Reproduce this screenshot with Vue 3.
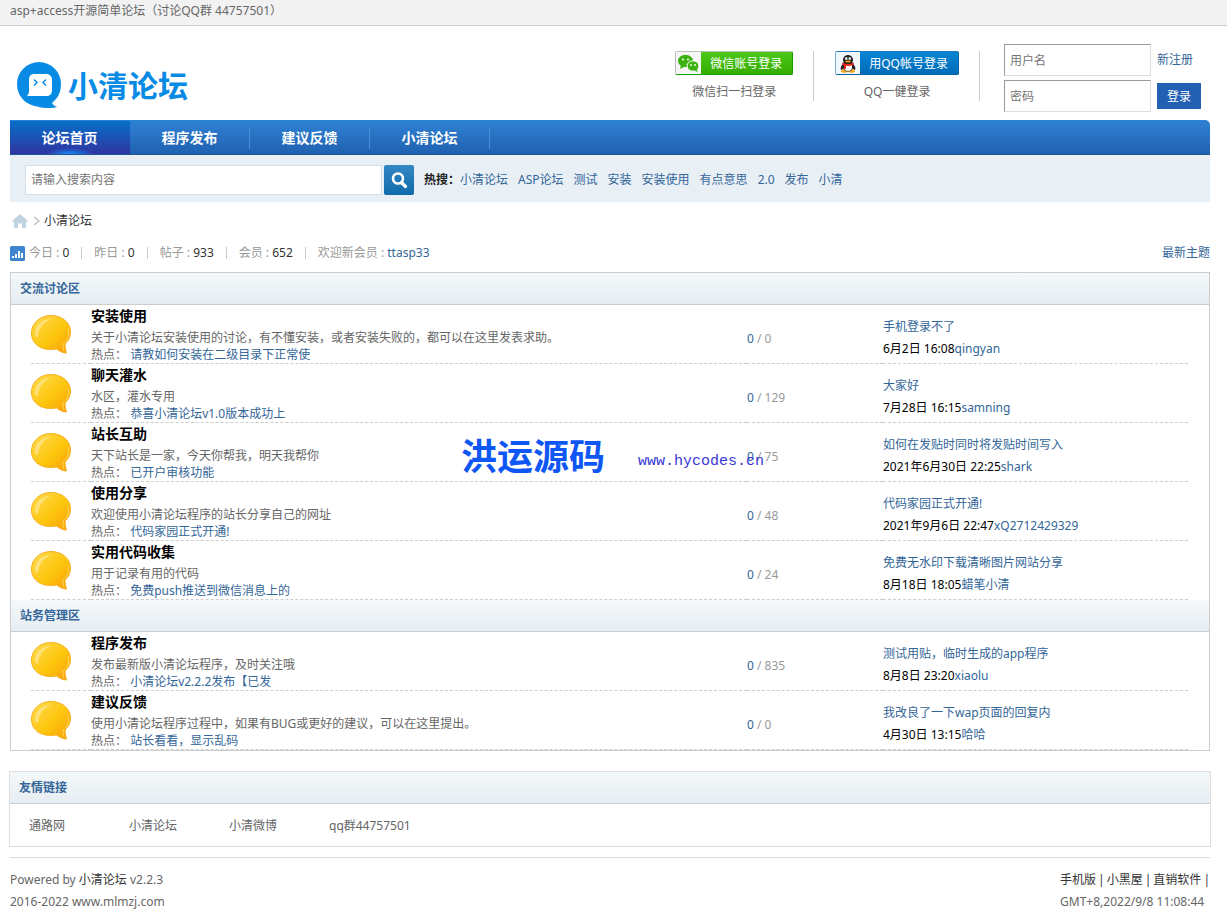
<script setup>
import { ref } from 'vue'

const keyword = ref('')
const user = ref('')
const password = ref('')

const navItems = ['论坛首页', '程序发布', '建议反馈', '小清论坛']
const hotWords = ['小清论坛', 'ASP论坛', '测试', '安装', '安装使用', '有点意思', '2.0', '发布', '小清']
const stats = [
  { label: '今日', value: '0' },
  { label: '昨日', value: '0' },
  { label: '帖子', value: '933' },
  { label: '会员', value: '652' },
]
const sections = [
  {
    name: '交流讨论区',
    forums: [
      { name: '安装使用', desc: '关于小清论坛安装使用的讨论，有不懂安装，或者安装失败的，都可以在这里发表求助。', hot: '请教如何安装在二级目录下正常使', today: '0', total: '0', last: '手机登录不了', time: '6月2日 16:08', by: 'qingyan' },
      { name: '聊天灌水', desc: '水区，灌水专用', hot: '恭喜小清论坛v1.0版本成功上', today: '0', total: '129', last: '大家好', time: '7月28日 16:15', by: 'samning' },
      { name: '站长互助', desc: '天下站长是一家，今天你帮我，明天我帮你', hot: '已开户审核功能', today: '0', total: '75', last: '如何在发贴时同时将发贴时间写入', time: '2021年6月30日 22:25', by: 'shark' },
      { name: '使用分享', desc: '欢迎使用小清论坛程序的站长分享自己的网址', hot: '代码家园正式开通!', today: '0', total: '48', last: '代码家园正式开通!', time: '2021年9月6日 22:47', by: 'xQ2712429329' },
      { name: '实用代码收集', desc: '用于记录有用的代码', hot: '免费push推送到微信消息上的', today: '0', total: '24', last: '免费无水印下载清晰图片网站分享', time: '8月18日 18:05', by: '蜡笔小清' },
    ],
  },
  {
    name: '站务管理区',
    forums: [
      { name: '程序发布', desc: '发布最新版小清论坛程序，及时关注哦', hot: '小清论坛v2.2.2发布【已发', today: '0', total: '835', last: '测试用贴，临时生成的app程序', time: '8月8日 23:20', by: 'xiaolu' },
      { name: '建议反馈', desc: '使用小清论坛程序过程中，如果有BUG或更好的建议，可以在这里提出。', hot: '站长看看，显示乱码', today: '0', total: '0', last: '我改良了一下wap页面的回复内', time: '4月30日 13:15', by: '哈哈' },
    ],
  },
]
const friendLinks = ['通路网', '小清论坛', '小清微博', 'qq群44757501']
const footLinks = ['手机版', '小黑屋', '直销软件']
</script>

<template>
  <div class="page">
    <div class="topbar">asp+access开源简单论坛（讨论QQ群 44757501）</div>

    <div class="wrap">
      <header class="header">
        <a class="logo" href="#">
          <svg width="46" height="48" viewBox="0 0 46 48" aria-hidden="true">
            <path fill="#078be4" d="M22 0a22 22 0 0 1 22 22c0 8-3 14-9 19 1 2 3 3 5 4-6 2-14 1-20-.5C8 42.500 0 34 0 22A22 22 0 0 1 22 0z" />
            <path fill="#fff" d="M17 12h12c4 0 6 2.500 6 6v10c0 4-2 6-6 6H10c1.500-1.500 2-3 2-5V18c0-4 2-6 5-6z" />
            <path fill="none" stroke="#078be4" stroke-width="1.500" d="M17 17.500l3 3-3 3M29 17.500l-3 3 3 3" />
          </svg>
          <span>小清论坛</span>
        </a>

        <div class="account">
          <div class="quick">
            <a class="oauth wechat" href="#">
              <svg width="25" height="22" viewBox="0 0 25 22" aria-hidden="true">
                <ellipse cx="9.500" cy="9" rx="7.500" ry="6.200" fill="#3eb211" />
                <path d="M5 13l-1 4 4-2z" fill="#3eb211" />
                <ellipse cx="17" cy="14" rx="6" ry="5.200" fill="#3eb211" stroke="#fff" />
                <path d="M18 18l3.500 2-.5-3.500z" fill="#3eb211" />
                <g fill="#fff"><circle cx="7" cy="7.500" r="1" /><circle cx="12" cy="7.500" r="1" /><circle cx="15" cy="13" r=".9" /><circle cx="19" cy="13" r=".9" /></g>
              </svg>
              <span>微信账号登录</span>
            </a>
            <p>微信扫一扫登录</p>
          </div>
          <div class="quick">
            <a class="oauth qq" href="#">
              <svg width="24" height="22" viewBox="0 0 24 22" aria-hidden="true">
                <path d="M7 12c-2 2-3 4-2 6l2-1z M17 12c2 2 3 4 2 6l-2-1z" fill="#222" />
                <ellipse cx="8.500" cy="19" rx="3.500" ry="1.800" fill="#f5a623" />
                <ellipse cx="15.500" cy="19" rx="3.500" ry="1.800" fill="#f5a623" />
                <ellipse cx="12" cy="14" rx="5.500" ry="5.500" fill="#222" />
                <ellipse cx="12" cy="15" rx="4" ry="4" fill="#fff" />
                <ellipse cx="12" cy="8" rx="5" ry="5" fill="#222" />
                <ellipse cx="10.300" cy="6.500" rx="1.200" ry="1.600" fill="#fff" />
                <ellipse cx="13.700" cy="6.500" rx="1.200" ry="1.600" fill="#fff" />
                <ellipse cx="12" cy="9.500" rx="2.800" ry="1" fill="#f5a623" />
                <path d="M6.500 10.500c3 2 8 2 11 0l.5 2c-2 1-4 1.500-6 1.500l-2-.2V17H8v-3.500l-2-1z" fill="#e8251f" />
              </svg>
              <span>用QQ帐号登录</span>
            </a>
            <p>QQ一健登录</p>
          </div>
          <form class="login" @submit.prevent>
            <input v-model="user" type="text" placeholder="用户名" aria-label="用户名" />
            <a href="#">新注册</a>
            <input v-model="password" type="password" placeholder="密码" aria-label="密码" />
            <button type="submit">登录</button>
          </form>
        </div>
      </header>

      <nav class="nav">
        <a v-for="(item, i) in navItems" :key="item" href="#" :class="{ active: i === 0 }">{{ item }}</a>
      </nav>

      <form class="search" @submit.prevent>
        <input v-model="keyword" type="text" placeholder="请输入搜索内容" aria-label="请输入搜索内容" />
        <button type="submit" aria-label="搜索">
          <svg width="30" height="30" viewBox="0 0 30 30" aria-hidden="true">
            <circle cx="14" cy="13.500" r="5" fill="none" stroke="#fff" stroke-width="2.600" />
            <path d="M17.500 17.500l4 4" stroke="#fff" stroke-width="3.200" stroke-linecap="round" />
          </svg>
        </button>
        <b>热搜：</b>
        <div class="hot-words">
          <a v-for="word in hotWords" :key="word" href="#">{{ word }}</a>
        </div>
      </form>

      <div class="crumb">
        <a href="#" aria-label="首页">
          <svg width="20" height="16" viewBox="0 0 20 16" aria-hidden="true">
            <path fill="#bfd3e0" d="M10 1l8.500 7.500h-2.500V15h-4v-4.500H8V15H4V8.500H1.500z" />
          </svg>
        </a>
        <svg width="8" height="10" viewBox="0 0 8 10" aria-hidden="true">
          <path d="M1 1l5 4-5 4" fill="none" stroke="#bbb" stroke-width="1.300" />
        </svg>
        <a href="#">小清论坛</a>
      </div>

      <div class="stats">
        <svg width="15" height="15" viewBox="0 0 15 15" aria-hidden="true">
          <rect width="15" height="15" rx="1.500" fill="#3f84cf" />
          <path fill="#fff" d="M2 10h2v2H2zM5 8h2v4H5zM8 5h2v7H8zM11 7h2v5h-2z" />
        </svg>
        <ul>
          <li v-for="stat in stats" :key="stat.label">{{ stat.label }} : <em>{{ stat.value }}</em></li>
          <li>欢迎新会员 : <a href="#">ttasp33</a></li>
        </ul>
        <a href="#">最新主题</a>
      </div>

      <main class="board">
        <section v-for="section in sections" :key="section.name">
          <h2 class="bar">{{ section.name }}</h2>
          <div class="rows">
            <table>
              <colgroup><col class="c-icon" /><col /><col class="c-count" /><col class="c-last" /></colgroup>
              <tbody>
                <tr v-for="forum in section.forums" :key="forum.name">
                  <td class="icon">
                    <svg width="42" height="42" viewBox="0 0 42 42" aria-hidden="true">
                      <defs>
                        <linearGradient id="bubble" x1="0" y1="0" x2="1" y2="1">
                          <stop offset="0" stop-color="#ffdc55" />
                          <stop offset=".55" stop-color="#fdc60c" />
                          <stop offset="1" stop-color="#f99c0c" />
                        </linearGradient>
                      </defs>
                      <path fill="url(#bubble)" stroke="#f9b01e" d="M20 1.500C31 1.500 39.500 8.500 39.500 18c0 5-2 9-5.500 12 0 3 .5 5.500 1.500 9-4 0-7-2-10-4C10 37.500.5 30 .5 19 .5 9 9 1.500 20 1.500z" />
                      <path fill="#fff" opacity=".35" d="M4 20C4 11 11 5 21 5c-8 2-13 8-14 18-2 0-3-1-3-3z" />
                      <path fill="none" stroke="#ffd75a" d="M37 15c2 7-1 12-5 15 0 3 0 4 1 7" />
                    </svg>
                  </td>
                  <td class="info">
                    <h3><a href="#">{{ forum.name }}</a></h3>
                    <p>{{ forum.desc }}</p>
                    <p>热点： <a href="#">{{ forum.hot }}</a></p>
                  </td>
                  <td class="count"><em>{{ forum.today }}</em> / {{ forum.total }}</td>
                  <td class="last">
                    <a href="#">{{ forum.last }}</a>
                    <div>{{ forum.time }}<a href="#">{{ forum.by }}</a></div>
                  </td>
                </tr>
              </tbody>
            </table>
          </div>
        </section>
        <div class="watermark"><b>洪运源码</b><span>www.hycodes.cn</span></div>
      </main>

      <section class="friends">
        <h2 class="bar">友情链接</h2>
        <ul>
          <li v-for="link in friendLinks" :key="link"><a href="#">{{ link }}</a></li>
        </ul>
      </section>

      <footer class="footer">
        <div>
          <p>Powered by <a href="#">小清论坛</a> v2.2.3</p>
          <p>2016-2022 www.mlmzj.com</p>
        </div>
        <div>
          <p class="foot-links"><template v-for="link in footLinks" :key="link"><a href="#">{{ link }}</a><span>|</span></template></p>
          <p>GMT+8,2022/9/8 11:08:44</p>
        </div>
      </footer>
    </div>
  </div>
</template>

<style>
body {
  margin: 0;
  background: #fff;
}
</style>

<style scoped>
.page,
.page input,
.page button {
  font-family: "Noto Sans", "Noto Sans CJK SC", sans-serif;
  font-size: 12px;
}
.page {
  color: #666;
  line-height: 22px;
}
.page * {
  box-sizing: border-box;
}
a {
  color: #369;
  text-decoration: none;
}
p, h2, h3, ul {
  margin: 0;
  padding: 0;
}
ul {
  list-style: none;
}
em {
  font-style: normal;
}
svg {
  display: block;
}
input::placeholder {
  color: #757575;
  opacity: 1;
}
.topbar {
  height: 26px;
  padding: 0 10px;
  background: #f2f2f2;
  border-bottom: 1px solid #cdcdcd;
}
.wrap {
  padding: 0 17px 0 10px;
}

.header {
  display: flex;
  justify-content: space-between;
  height: 94px;
}
.logo {
  display: flex;
  align-items: center;
  gap: 5px;
  padding: 26px 0 0 7px;
  color: #078be4;
  font-size: 30px;
  font-weight: bold;
}
.account {
  display: flex;
  align-items: flex-start;
  padding: 18px 9px 0 0;
}
.quick {
  height: 50px;
  margin-top: 7px;
  padding-right: 20px;
  margin-right: 21px;
  border-right: 1px solid #ccc;
  text-align: center;
}
.quick + .quick {
  margin-right: 24px;
}
.quick p {
  padding-top: 6px;
}
.oauth {
  display: flex;
  height: 24px;
  border: 1px solid;
  border-radius: 2px;
  color: #fff;
  line-height: 23px;
}
.oauth span {
  padding: 0 10px 0 9px;
}
.wechat {
  background: linear-gradient(#4cc81a, #35ad00);
  border-color: #b9c4b5 #15a000 #15a000 #bbb;
}
.wechat svg {
  background: #f6f6f6;
}
.qq {
  background: linear-gradient(#0785d4, #006bb8);
  border-color: #1b79b9 #0062a8 #0062a8 #77a6c8;
}
.qq svg {
  background: #f1f8fd;
}
.login {
  display: grid;
  grid-template-columns: 147px 44px;
  gap: 4px 6px;
  align-items: center;
}
.login input {
  width: 100%;
  height: 32px;
  padding: 0 5px;
  border: 1px solid;
  border-color: #999 #ddd #ddd #999;
}
.login button {
  height: 26px;
  padding: 0;
  border: 0;
  background: #235fb3;
  color: #fff;
}

.nav {
  display: flex;
  height: 35px;
  overflow: hidden;
  border-top: 1px solid #2b83d3;
  border-bottom: 1px solid #1f559b;
  border-radius: 0 5px 0 0;
  background: linear-gradient(#2f81d4, #2061b0);
}
.nav a {
  position: relative;
  width: 120px;
  padding-right: 1px;
  color: #fff;
  font-size: 14px;
  font-weight: bold;
  line-height: 34px;
  text-align: center;
}
.nav a:not(.active)::after {
  content: "";
  position: absolute;
  top: 6px;
  right: 0;
  width: 1px;
  height: 22px;
  background: #4a8fd8;
}
.nav .active {
  background:
    radial-gradient(ellipse 24px 6px at 50% 100%, #168bf5, transparent),
    linear-gradient(#0670c9, #3034a0);
}

.search {
  display: flex;
  align-items: center;
  height: 47px;
  padding: 2px 15px 0;
  background: #e8eff5;
}
.search input {
  width: 357px;
  height: 30px;
  padding: 0 5px;
  border: 1px solid #d5e0e6;
  background: #fff;
}
.search button {
  width: 30px;
  height: 30px;
  margin: 0 10px 0 2px;
  padding: 0;
  border: 0;
  border-radius: 2px;
  background: linear-gradient(#3388c4, #106aab);
}
.search b {
  color: #222;
}
.hot-words {
  display: flex;
  gap: 10px;
}

.crumb {
  display: flex;
  align-items: center;
  gap: 3px;
  height: 38px;
}
.crumb a {
  color: #333;
}

.stats {
  display: flex;
  align-items: center;
  height: 26px;
  margin-bottom: 6px;
  color: #999;
}
.stats ul {
  display: flex;
  flex: 1;
  margin-left: 4px;
}
.stats li {
  display: flex;
  align-items: center;
  white-space: pre;
}
.stats li + li::before {
  content: "";
  width: 1px;
  height: 12px;
  margin: 0 12px;
  background: #ccc;
}
.stats em {
  color: #333;
}

.board {
  position: relative;
  border: 1px solid #cdcdcd;
}
.bar {
  height: 32px;
  padding: 0 9px;
  border-bottom: 1px solid #cdcdcd;
  background: linear-gradient(#f4f8fa, #e6edf2);
  color: #369;
  font-size: 12px;
  font-weight: bold;
  line-height: 31px;
}
.rows {
  padding: 0 21px 0 20px;
}
table {
  width: 100%;
  table-layout: fixed;
  border-collapse: separate;
  border-spacing: 0;
}
.c-icon {
  width: 60px;
}
.c-count {
  width: 136px;
}
.c-last {
  width: 305px;
}
td {
  height: 59px;
  padding: 0;
  border-bottom: 1px dashed #cdcdcd;
}
.icon {
  padding-top: 2px;
}
.info {
  line-height: 17px;
}
h3 {
  margin-bottom: 2px;
  font-size: 14px;
  line-height: 22px;
}
h3 a {
  color: #000;
}
.count {
  padding-top: 10px;
  color: #999;
}
.count em {
  color: #369;
}
.last {
  padding-top: 8px;
}
.last > a {
  display: block;
}
.last div {
  color: #000;
}
.watermark {
  position: absolute;
  top: 157px;
  left: 450px;
  display: flex;
  align-items: center;
  gap: 33px;
  line-height: 44px;
  pointer-events: none;
}
.watermark b {
  color: #0f57f5;
  font-size: 36px;
}
.watermark span {
  padding-top: 10px;
  color: #3838d8;
  font-family: "Liberation Mono", monospace;
  font-size: 15px;
}

.friends {
  margin: 20px -1px 10px;
  border: 1px solid #ddd;
}
.friends ul {
  display: flex;
  padding: 11px 19px 9px;
}
.friends li {
  width: 100px;
}
.friends li a {
  color: #666;
}

.footer {
  display: flex;
  justify-content: space-between;
  padding-top: 11px;
  border-top: 1px solid #ddd;
}
.foot-links {
  display: flex;
  gap: 2px;
}
.footer a,
.foot-links {
  color: #333;
}
</style>
